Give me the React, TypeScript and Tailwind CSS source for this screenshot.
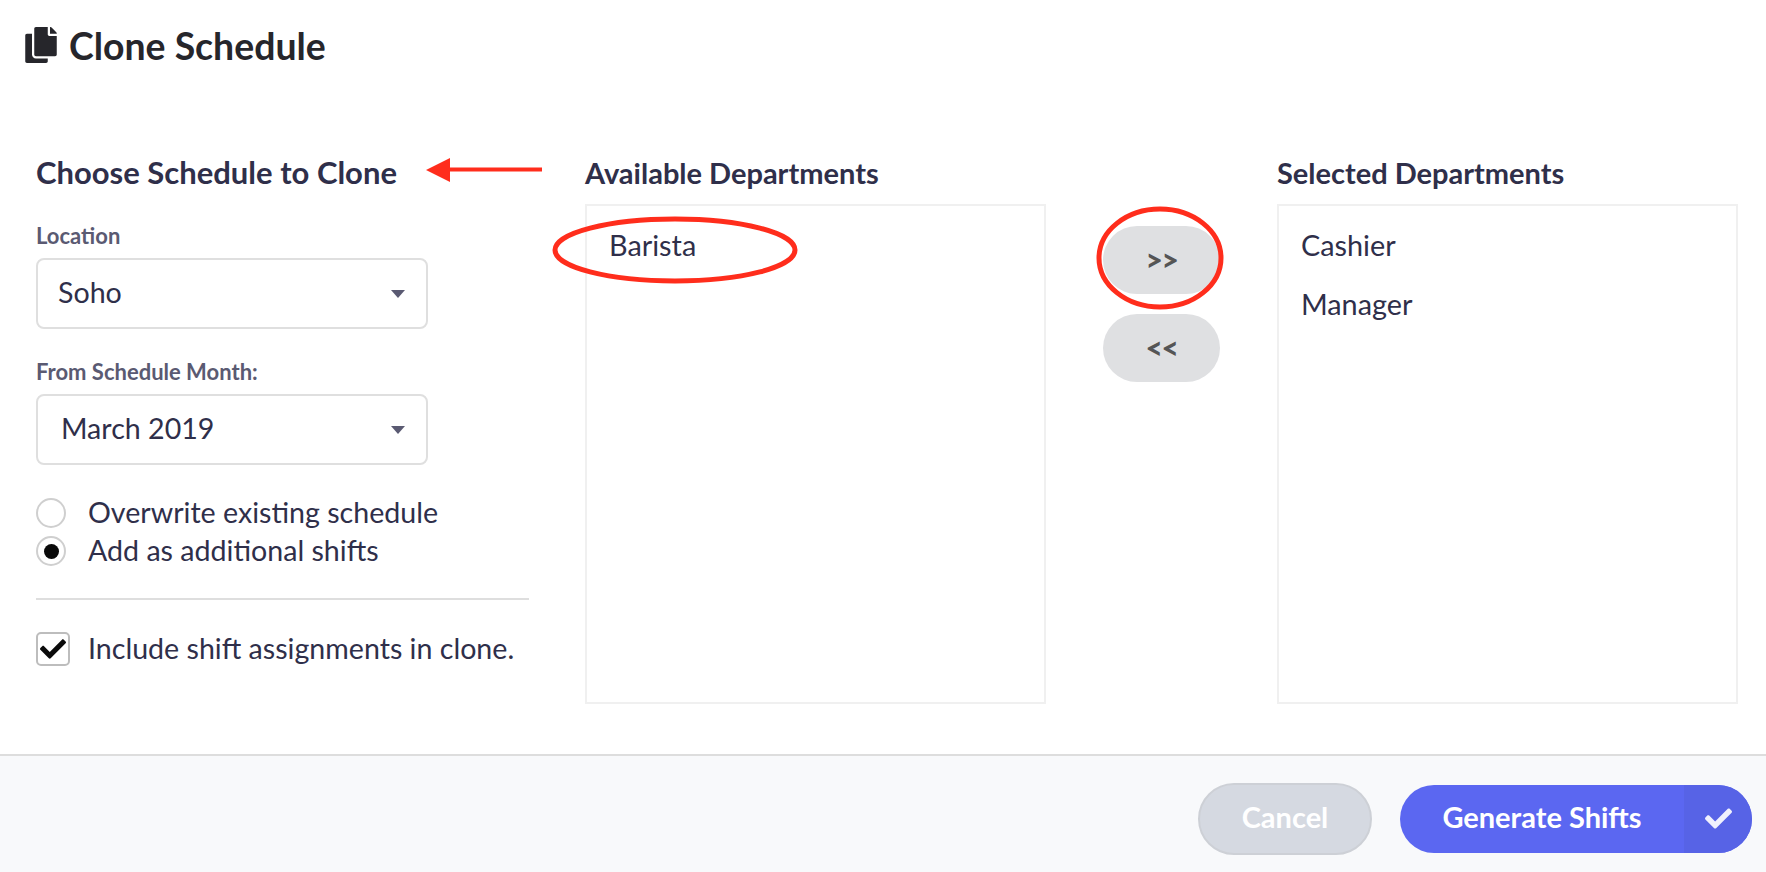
import { FaCheck, FaCopy } from 'react-icons/fa'

function Caret() {
  return (
    <svg width="14" height="8" viewBox="0 0 14 8" className="shrink-0">
      <path d="M0 0h14L7 8z" fill="#5a5a72" />
    </svg>
  )
}

function SelectBox({ label, value, textPad }: { label: string; value: string; textPad: string }) {
  return (
    <div className="flex flex-col">
      <p className="text-[22px] leading-[26px] font-bold text-[#5a5a72]">{label}</p>
      <div className={`mt-[9px] h-[71px] w-[392px] flex items-center justify-between border-2 border-[#dfdfdf] rounded-[8px] pr-[21px] ${textPad}`}>
        <span className="text-[28.6px] leading-[40px] pb-[3px] text-[#2f2f4a]">{value}</span>
        <Caret />
      </div>
    </div>
  )
}

function Radio({ label, checked }: { label: string; checked?: boolean }) {
  return (
    <div className="h-[38px] flex items-center gap-[22px]">
      <span className="w-[30px] h-[30px] rounded-full border-2 border-[#cfcfcf] flex items-center justify-center">
        {checked && <span className="w-[15px] h-[15px] rounded-full bg-[#0a0a0a]" />}
      </span>
      <span className="text-[28.6px] leading-[38px] pb-[2px] text-[#2f2f4a]">{label}</span>
    </div>
  )
}

function ListColumn({ title, items, width }: { title: string; items: string[]; width: string }) {
  return (
    <div className={`flex flex-col ${width}`}>
      <h2 className="h-[56px] text-[29px] leading-[50px] font-bold text-[#2f2f4a]">{title}</h2>
      <div className="h-[500px] border-2 border-[#f0f0f0] pt-[10px] pl-[22px] flex flex-col">
        {items.map((item) => (
          <div key={item} className="h-[59px] flex items-center text-[28.8px] text-[#2f2f4a]">
            {item}
          </div>
        ))}
      </div>
    </div>
  )
}

export default function App() {
  return (
    <div className="relative w-[1766px] h-[872px] bg-white flex flex-col font-['Lato',sans-serif] overflow-hidden">
      <header className="h-[148px] pl-[25px] pt-[27px] flex items-start gap-[12px]">
        <FaCopy className="w-[32px] h-[36px] text-[#26262b]" />
        <h1 className="text-[37.4px] leading-[38px] font-bold text-[#26262b]">Clone Schedule</h1>
      </header>

      <main className="flex-1 flex pl-[36px]">
        <div className="w-[493px] flex flex-col">
          <h2 className="h-[56px] text-[31px] leading-[48px] font-bold text-[#2f2f4a]">Choose Schedule to Clone</h2>
          <div className="mt-[19px]">
            <SelectBox label="Location" value="Soho" textPad="pl-[20px]" />
          </div>
          <div className="mt-[30px]">
            <SelectBox label="From Schedule Month:" value="March 2019" textPad="pl-[23px]" />
          </div>
          <div className="mt-[29px] flex flex-col">
            <Radio label="Overwrite existing schedule" />
            <Radio label="Add as additional shifts" checked />
          </div>
          <div className="mt-[28px] border-t-2 border-[#dedede]" />
          <div className="mt-[29px] flex items-center gap-[8px]">
            <span className="w-[34px] h-[34px] rounded-[5px] border-2 border-[#bdbdbd] flex items-center justify-center mr-[10px]">
              <FaCheck className="w-[26px] h-[26px] text-[#0a0a0a]" />
            </span>
            <span className="text-[28.6px] leading-[38px] pb-[2px] text-[#2f2f4a]">Include shift assignments in clone.</span>
          </div>
        </div>

        <div className="ml-[56px]">
          <ListColumn title="Available Departments" items={['Barista']} width="w-[461px]" />
        </div>

        <div className="w-[231px] flex flex-col items-center pt-[78px] gap-[20px]">
          <button className="w-[117px] h-[68px] rounded-[34px] bg-[#dfe0e2] text-[30px] leading-[62px] pb-[3px] tracking-tighter font-black text-[#555]">&gt;&gt;</button>
          <button className="w-[117px] h-[68px] rounded-[34px] bg-[#dfe0e2] text-[30px] leading-[62px] pb-[3px] tracking-tighter font-black text-[#555]">&lt;&lt;</button>
        </div>

        <ListColumn title="Selected Departments" items={['Cashier', 'Manager']} width="w-[461px]" />
      </main>

      <footer className="h-[118px] border-t-2 border-[#dddddd] bg-[#f8f9fb] flex items-center justify-end pr-[14px] pt-[9px] gap-[28px]">
        <button className="w-[174px] h-[72px] rounded-[36px] border-2 border-[#cdd0d6] bg-[#d5d9e1] text-[29px] pb-[3px] font-bold text-white">
          Cancel
        </button>
        <button className="w-[352px] h-[68px] rounded-[34px] bg-[#5b67f1] flex items-stretch overflow-hidden text-white">
          <span className="flex-1 flex items-center justify-center text-[29px] pb-[3px] font-bold">Generate Shifts</span>
          <span className="w-[68px] bg-[#5763e6] flex items-center justify-center">
            <FaCheck className="w-[27px] h-[27px] text-[#f0f1fd]" />
          </span>
        </button>
      </footer>

      {/* red annotations drawn on top of the screenshot */}
      <svg className="absolute left-0 top-0 pointer-events-none" width="1766" height="872" viewBox="0 0 1766 872" fill="none">
        <path d="M450 169.5H542" stroke="#ff2d1c" strokeWidth="4" />
        <path d="M426 170L450 158V182Z" fill="#ff2d1c" />
        <ellipse cx="675" cy="250" rx="120" ry="31" stroke="#ff2d1c" strokeWidth="5" />
        <ellipse cx="1160" cy="258" rx="61" ry="49" stroke="#ff2d1c" strokeWidth="5" />
      </svg>
    </div>
  )
}
